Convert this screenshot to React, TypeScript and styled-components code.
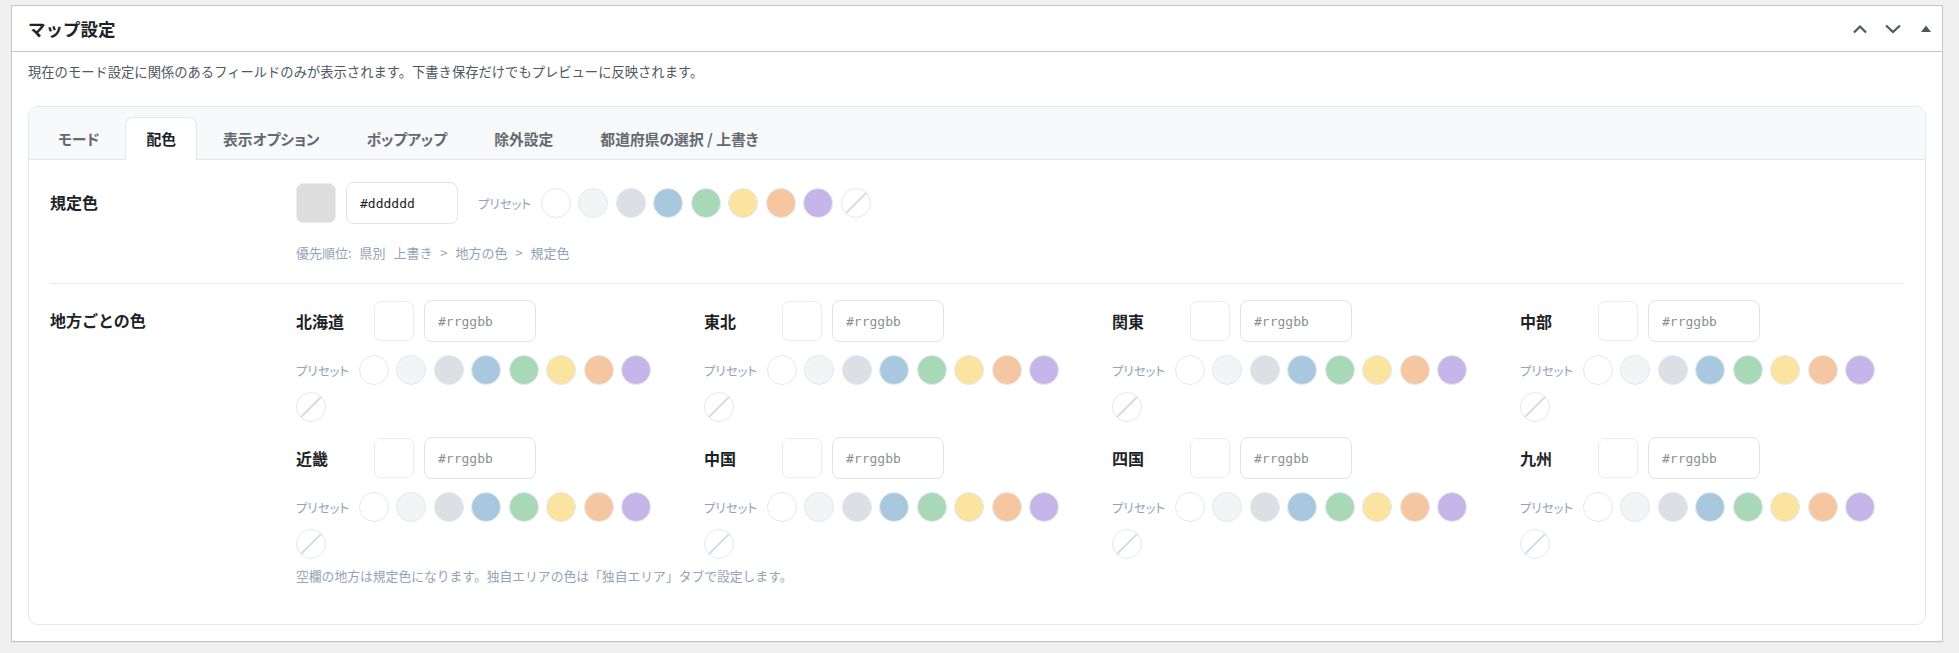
import styled, { createGlobalStyle } from "styled-components";

const GlobalStyle = createGlobalStyle`
  body {
    margin: 0;
    background: #f0f0f1;
    font-family: "Noto Sans CJK JP", "Noto Sans", sans-serif;
    color: #1d2327;
  }
`;

const PRESETS = [
  "#ffffff",
  "#f3f4f6",
  "#dcdfe4",
  "#a8c8e0",
  "#a8d8b8",
  "#fbe3a0",
  "#f6c6a0",
  "#c5b5e8",
];

const TABS = ["モード", "配色", "表示オプション", "ポップアップ", "除外設定", "都道府県の選択 / 上書き"];

const REGIONS = ["北海道", "東北", "関東", "中部", "近畿", "中国", "四国", "九州"];

const Presets = () => (
  <PresetList>
    <PresetLabel>プリセット</PresetLabel>
    {PRESETS.map((c) => (
      <Dot key={c} $color={c} />
    ))}
    <NoneDot />
  </PresetList>
);

const App = () => {
  return (
    <Page>
      <GlobalStyle />
      <Postbox>
        <Header>
          <Title>マップ設定</Title>
          <HeaderButtons>
            <IconButton aria-label="上へ">
              <svg width="16" height="10" viewBox="0 0 16 10">
                <path d="M2 8.5 L8 2.5 L14 8.5" fill="none" stroke="#50575e" strokeWidth="2.2" />
              </svg>
            </IconButton>
            <IconButton aria-label="下へ">
              <svg width="18" height="10" viewBox="0 0 18 10">
                <path d="M2 1.5 L9 8 L16 1.5" fill="none" stroke="#50575e" strokeWidth="2.2" />
              </svg>
            </IconButton>
            <IconButton aria-label="閉じる">
              <svg width="10" height="8" viewBox="0 0 10 8">
                <polygon points="0,7 5,0.5 10,7" fill="#50575e" />
              </svg>
            </IconButton>
          </HeaderButtons>
        </Header>
        <Inside>
          <Description>
            現在のモード設定に関係のあるフィールドのみが表示されます。下書き保存だけでもプレビューに反映されます。
          </Description>
          <TabBox>
            <TabBar>
              {TABS.map((t) => (
                <Tab key={t} $active={t === "配色"}>
                  {t}
                </Tab>
              ))}
            </TabBar>
            <TabPanel>
              <FieldRow $divider>
                <FieldLabel>規定色</FieldLabel>
                <div>
                  <ColorLine>
                    <Swatch $color="#dddddd" />
                    <HexInput defaultValue="#dddddd" />
                    <PresetWrap>
                      <Presets />
                    </PresetWrap>
                  </ColorLine>
                  <Hint $top={19} $size={13} $spacing={5}>
                    優先順位: 県別 上書き &gt; 地方の色 &gt; 規定色
                  </Hint>
                </div>
              </FieldRow>
              <FieldRow>
                <FieldLabel>地方ごとの色</FieldLabel>
                <div>
                  <RegionGrid>
                    {REGIONS.map((r) => (
                      <RegionCell key={r}>
                        <ColorLine>
                          <RegionName>{r}</RegionName>
                          <Swatch $color="#ffffff" />
                          <HexInput placeholder="#rrggbb" />
                        </ColorLine>
                        <RegionPresets>
                          <Presets />
                        </RegionPresets>
                      </RegionCell>
                    ))}
                  </RegionGrid>
                  <Hint $top={7} $size={12.8}>
                    空欄の地方は規定色になります。独自エリアの色は「独自エリア」タブで設定します。
                  </Hint>
                </div>
              </FieldRow>
            </TabPanel>
          </TabBox>
        </Inside>
      </Postbox>
    </Page>
  );
};

export default App;

const Page = styled.div`
  padding: 5px 16px 15px 11px;
`;

const Postbox = styled.div`
  background: #fff;
  border: 1px solid #c3c4c7;
  box-shadow: 0 1px 1px rgba(0, 0, 0, 0.04);
`;

const Header = styled.div`
  display: flex;
  align-items: center;
  justify-content: space-between;
  height: 45px;
  padding-left: 16px;
  border-bottom: 1px solid #c3c4c7;
`;

const Title = styled.h2`
  margin: 0;
  font-size: 17.5px;
  font-weight: 700;
  color: #1d2327;
`;

const HeaderButtons = styled.div`
  display: flex;
  align-items: center;
  height: 100%;
`;

const IconButton = styled.button`
  width: 33px;
  height: 100%;
  padding: 0;
  border: 0;
  background: none;
  display: flex;
  align-items: center;
  justify-content: center;
  cursor: pointer;
`;

const Inside = styled.div`
  padding: 10px 16px 16px;
`;

const Description = styled.p`
  margin: 0 0 24px;
  font-size: 13.3px;
  line-height: 20px;
  color: #50575e;
`;

const TabBox = styled.div`
  border: 1px solid #e2e8f0;
  border-radius: 10px;
  overflow: hidden;
`;

const TabBar = styled.div`
  display: flex;
  gap: 5px;
  padding: 10px 8px 0;
  background: #f8f9fb;
  border-bottom: 1px solid #e2e8f0;
`;

const Tab = styled.div<{ $active?: boolean }>`
  height: 41px;
  padding: 0 20px;
  margin-bottom: -1px;
  display: flex;
  align-items: center;
  font-size: 14.8px;
  font-weight: 600;
  font-feature-settings: "palt";
  color: ${(p) => (p.$active ? "#1d2327" : "#646970")};
  background: ${(p) => (p.$active ? "#fff" : "transparent")};
  border: 1px solid ${(p) => (p.$active ? "#e2e8f0" : "transparent")};
  border-bottom-color: ${(p) => (p.$active ? "#fff" : "transparent")};
  border-radius: 8px 8px 0 0;
`;

const TabPanel = styled.div`
  padding: 22px 21px 38px;
`;

const FieldRow = styled.div<{ $divider?: boolean }>`
  display: grid;
  grid-template-columns: 246px 1fr;
  padding: ${(p) => (p.$divider ? "0 0 20px" : "16px 0 0")};
  border-bottom: ${(p) => (p.$divider ? "1px solid #e2e8f0" : "none")};
`;

const FieldLabel = styled.div`
  font-size: 16px;
  font-weight: 700;
  line-height: 40px;
  color: #1d2327;
`;

const ColorLine = styled.div`
  display: flex;
  align-items: center;
  gap: 10px;
  height: 42px;
`;

const Swatch = styled.div<{ $color: string }>`
  width: 40px;
  height: 40px;
  box-sizing: border-box;
  border: 1px solid #e8edf3;
  border-radius: 7px;
  background: ${(p) => p.$color};
`;

const HexInput = styled.input`
  width: 112px;
  height: 42px;
  box-sizing: border-box;
  padding: 0 13px;
  border: 1px solid #dfe4ec;
  border-radius: 8px;
  font-family: "DejaVu Sans Mono", "Liberation Mono", monospace;
  font-size: 13px;
  color: #1d2327;
  background: #fff;
  outline: none;

  &::placeholder {
    color: #8c8f94;
  }
`;

const PresetWrap = styled.div`
  margin-left: 10px;
`;

const PresetList = styled.div`
  display: flex;
  flex-wrap: wrap;
  align-items: center;
  gap: 7px 7.5px;
`;

const PresetLabel = styled.span`
  font-size: 12.5px;
  font-feature-settings: "palt";
  color: #94a3b8;
  margin-right: 2px;
`;

const Dot = styled.span<{ $color: string }>`
  width: 30px;
  height: 30px;
  box-sizing: border-box;
  border-radius: 50%;
  border: 1px solid #e2e8f0;
  background: ${(p) => p.$color};
`;

const NoneDot = styled.span`
  width: 30px;
  height: 30px;
  box-sizing: border-box;
  border-radius: 50%;
  border: 1px solid #e2e8f0;
  background: linear-gradient(
    135deg,
    transparent calc(50% - 1px),
    #d5deea calc(50% - 1px),
    #d5deea calc(50% + 1px),
    transparent calc(50% + 1px)
  );
`;

const Hint = styled.div<{ $top: number; $size: number; $spacing?: number }>`
  margin-top: ${(p) => p.$top}px;
  font-size: ${(p) => p.$size}px;
  line-height: 20px;
  word-spacing: ${(p) => p.$spacing ?? 0}px;
  color: #94a3b8;
`;

const RegionGrid = styled.div`
  display: grid;
  grid-template-columns: repeat(4, 1fr);
  column-gap: 24px;
  row-gap: 15px;
`;

const RegionCell = styled.div``;

const RegionName = styled.div`
  width: 68px;
  font-size: 16px;
  font-weight: 700;
  color: #1d2327;
`;

const RegionPresets = styled.div`
  margin-top: 13px;
`;
